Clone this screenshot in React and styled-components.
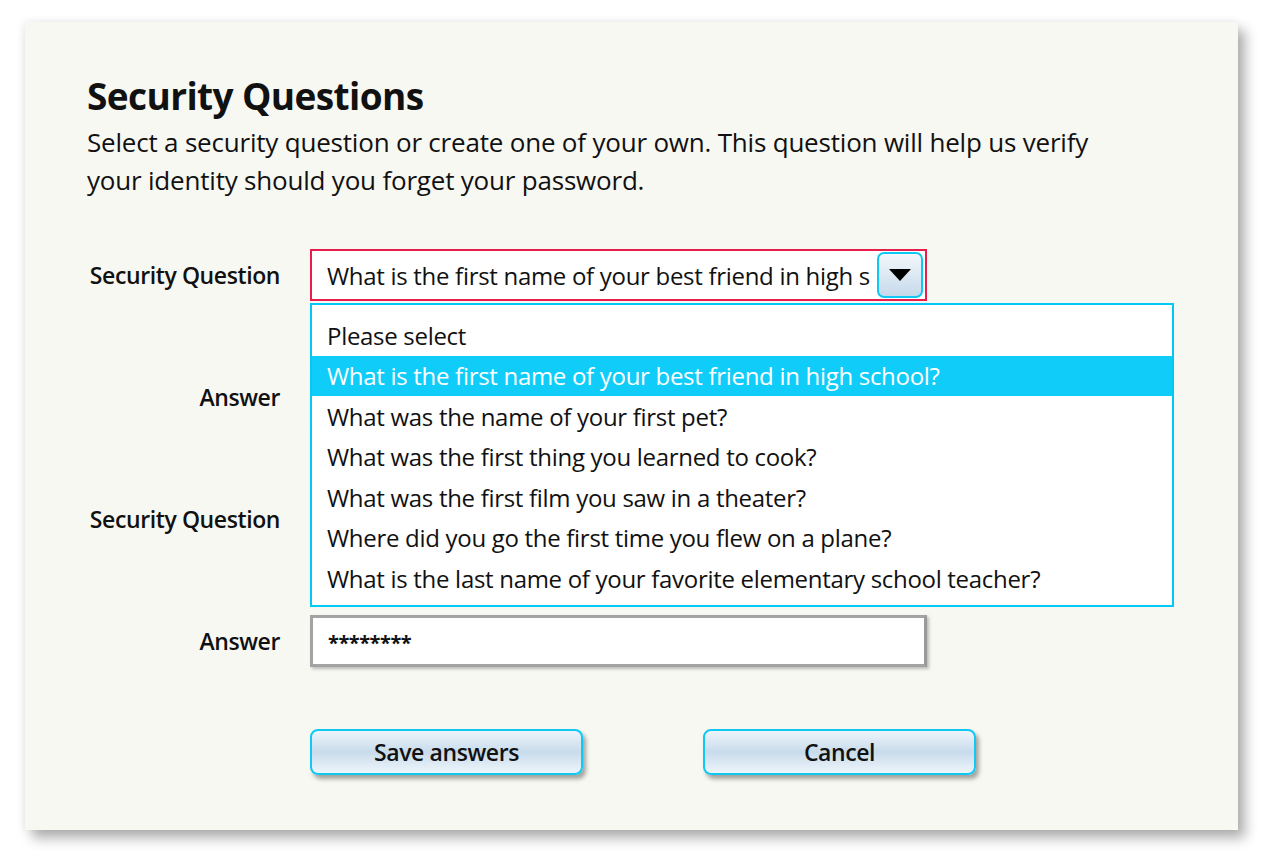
import React, { useState } from 'react';
import styled, { createGlobalStyle } from 'styled-components';

const GlobalStyle = createGlobalStyle`
  body {
    margin: 0;
    background: #ffffff;
    font-family: "Open Sans", "Noto Sans", sans-serif;
    color: #111;
  }
`;

const Page = styled.div`
  width: 1280px;
  height: 853px;
  padding: 22px 0 0 25px;
  box-sizing: border-box;
`;

const Panel = styled.div`
  position: relative;
  width: 1213px;
  height: 808px;
  box-sizing: border-box;
  padding: 50px 0 0 62px;
  background: #f8f8f3;
  box-shadow: 7px 8px 12px rgba(0, 0, 0, 0.32), -2px -1px 8px rgba(0, 0, 0, 0.06);
`;

const Title = styled.h1`
  margin: 0;
  font-size: 37px;
  line-height: 48px;
  font-weight: 700;
  letter-spacing: -0.6px;
`;

const Intro = styled.p`
  margin: 3px 0 0;
  width: 1040px;
  font-size: 26px;
  line-height: 38px;
  letter-spacing: -0.2px;
`;

const Form = styled.div`
  position: relative;
  margin-top: 50px;
  display: grid;
  grid-template-columns: 193px 617px;
  grid-auto-rows: 52px;
  column-gap: 30px;
  row-gap: 70px;
`;

const Label = styled.div`
  display: flex;
  align-items: center;
  justify-content: flex-end;
  font-size: 23px;
  font-weight: 600;
  letter-spacing: -0.4px;
`;

const SelectBox = styled.div`
  display: flex;
  align-items: center;
  box-sizing: border-box;
  height: 52px;
  padding: 0 2px 0 15px;
  background: #fff;
  border: 2px solid ${p => (p.$active ? '#ea1c4c' : '#a8a8a8')};
`;

const SelectValue = styled.div`
  flex: 1;
  overflow: hidden;
  white-space: nowrap;
  font-size: 24px;
  letter-spacing: -0.3px;
`;

const ArrowButton = styled.div`
  display: flex;
  align-items: center;
  justify-content: center;
  width: 46px;
  height: 46px;
  flex-shrink: 0;
  box-sizing: border-box;
  border: 2px solid #10c8f4;
  border-radius: 7px;
  background: linear-gradient(#f3f8fc, #c6d9ea);
`;

const TextInput = styled.div`
  display: flex;
  align-items: center;
  box-sizing: border-box;
  height: 52px;
  padding: 2px 0 0 15px;
  background: #fff;
  border: 3px solid #a3a3a3;
  border-right-color: #9a9a9a;
  box-shadow: 2px 2px 3px rgba(0, 0, 0, 0.25);
  font-size: 20px;
  font-weight: 700;
  letter-spacing: -0.5px;
`;

const Dropdown = styled.ul`
  position: absolute;
  top: 54px;
  left: 223px;
  width: 864px;
  height: 304px;
  box-sizing: border-box;
  margin: 0;
  padding: 10px 0 0;
  list-style: none;
  background: #fff;
  border: 2px solid #00c9f5;
  z-index: 2;
`;

const Option = styled.li`
  height: 40.5px;
  display: flex;
  align-items: center;
  padding-left: 15px;
  font-size: 24px;
  letter-spacing: -0.3px;
  white-space: nowrap;
  background: ${p => (p.$selected ? '#0fcdf8' : 'transparent')};
  color: ${p => (p.$selected ? '#fff' : '#111')};
`;

const Actions = styled.div`
  display: flex;
  gap: 120px;
  margin: 62px 0 0 223px;
`;

const Button = styled.button`
  width: 273px;
  height: 46px;
  box-sizing: border-box;
  border: 2px solid #0fc8f4;
  border-radius: 8px;
  background: linear-gradient(#eef5fb 0%, #c8dbeb 50%, #eef5fb 100%);
  box-shadow: 3px 4px 4px rgba(0, 0, 0, 0.35);
  font-family: inherit;
  font-size: 23px;
  font-weight: 600;
  letter-spacing: -0.4px;
  color: #111;
  padding: 0;
`;

const questions = [
  'Please select',
  'What is the first name of your best friend in high school?',
  'What was the name of your first pet?',
  'What was the first thing you learned to cook?',
  'What was the first film you saw in a theater?',
  'Where did you go the first time you flew on a plane?',
  'What is the last name of your favorite elementary school teacher?',
];

const Caret = () => (
  <svg width="24" height="14" viewBox="0 0 24 14">
    <path d="M1 1 H23 L12 13 Z" fill="#000" />
  </svg>
);

export default function App() {
  const [selected] = useState(1);

  return (
    <>
      <GlobalStyle />
      <Page>
        <Panel>
          <Title>Security Questions</Title>
          <Intro>
            Select a security question or create one of your own. This question will help us verify
            your identity should you forget your password.
          </Intro>

          <Form>
            <Label>Security Question</Label>
            <SelectBox $active>
              <SelectValue>What is the first name of your best friend in high s</SelectValue>
              <ArrowButton>
                <Caret />
              </ArrowButton>
            </SelectBox>

            <Label>Answer</Label>
            <TextInput />

            <Label>Security Question</Label>
            <SelectBox>
              <SelectValue />
              <ArrowButton>
                <Caret />
              </ArrowButton>
            </SelectBox>

            <Label>Answer</Label>
            <TextInput>********</TextInput>

            <Dropdown>
              {questions.map((q, i) => (
                <Option key={q} $selected={i === selected}>
                  {q}
                </Option>
              ))}
            </Dropdown>
          </Form>

          <Actions>
            <Button>Save answers</Button>
            <Button>Cancel</Button>
          </Actions>
        </Panel>
      </Page>
    </>
  );
}
